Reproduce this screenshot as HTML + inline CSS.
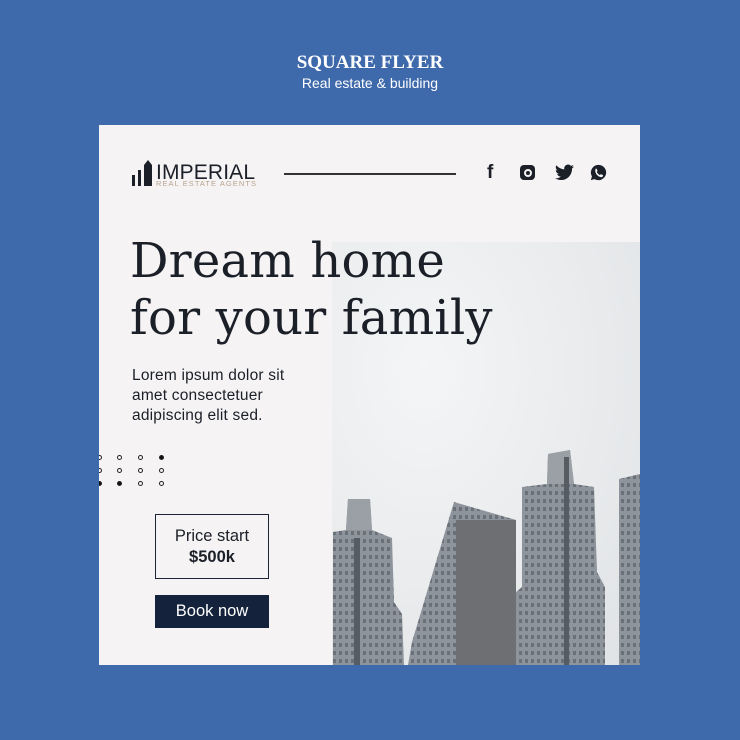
<!DOCTYPE html>
<html><head><style>
body{margin:0;width:740px;height:740px;background:#3e69ab;position:relative;overflow:hidden;font-family:"Liberation Sans",sans-serif}
.t1{position:absolute;top:52px;width:740px;text-align:center;color:#fff;font-family:"Liberation Serif",serif;font-weight:bold;font-size:19px}
.t2{position:absolute;top:75px;width:740px;text-align:center;color:#fff;font-size:14px}
.card{position:absolute;left:99px;top:125px;width:541px;height:540px;background:#f5f3f4;overflow:hidden}
.photo{position:absolute;left:233px;top:117px;width:308px;height:423px;background:radial-gradient(ellipse at 30% 30%,#f4f5f6 0%,#e8eaec 60%,#dfe2e5 100%)}
h1{position:absolute;left:31px;top:108px;margin:0;font-family:"DejaVu Serif","Liberation Serif",serif;font-weight:normal;font-size:48px;line-height:57px;color:#1b1f27;letter-spacing:0.2px;white-space:nowrap}
.p{position:absolute;left:33px;top:241px;font-size:15.5px;line-height:20px;color:#1b1f27;letter-spacing:0.2px}
.price{position:absolute;left:56px;top:389px;width:114px;height:65px;border:1.5px solid #1b2436;text-align:center;font-size:16.5px;line-height:21px;color:#1b1f27;box-sizing:border-box;padding-top:11px}
.book{position:absolute;left:56px;top:470px;width:114px;height:33px;background:#14233b;color:#fff;text-align:center;font-size:16.5px;line-height:33px}
.dot{position:absolute;width:5px;height:5px;border-radius:50%;border:1px solid #222;box-sizing:border-box}
.f{background:#111}
</style></head><body>
<div class="t1">SQUARE FLYER</div>
<div class="t2">Real estate &amp; building</div>
<div class="card">
 <div class="photo">
  <svg width="308" height="423" viewBox="0 0 308 423">
   <defs><pattern id="w" width="6" height="8" patternUnits="userSpaceOnUse"><rect width="6" height="8" fill="#8d949b"/><rect x="1" y="1" width="3" height="4" fill="#6a7178"/></pattern></defs>
   <g fill="url(#w)">
    <polygon points="1,423 1,290 14,288 16,257 38,257 40,288 60,296 62,360 70,372 72,423"/>
    <polygon points="76,423 80,400 122,260 184,278 184,423"/>
    <polygon points="184,423 184,350 190,345 190,245 215,242 216,212 238,208 242,242 262,245 265,330 273,345 273,423"/>
    <polygon points="287,423 287,237 308,232 308,423"/>
   </g>
   <g fill="#9aa0a6"><polygon points="16,257 38,257 40,288 14,288"/><polygon points="216,212 238,208 242,242 215,242"/></g>
   <g fill="#6d6f73">
    <rect x="22" y="296" width="6" height="127" fill="#555c63"/>
    <rect x="124" y="278" width="60" height="145"/>
    <rect x="232" y="215" width="5" height="208" fill="#555c63"/>
   </g>
  </svg>
 </div>
 <svg style="position:absolute;left:33px;top:34px" width="135" height="30">
  <rect x="0" y="16" width="3" height="11" fill="#1b1f27"/><rect x="6" y="11" width="3" height="16" fill="#1b1f27"/><polygon points="12,27 12,6 16,1 20,6 20,27" fill="#1b1f27"/>
  <text x="24" y="20" font-family="Liberation Sans" font-size="21" fill="#1b1f27" textLength="99">IMPERIAL</text>
  <text x="24" y="27" font-family="Liberation Sans" font-size="7.5" fill="#b7a48e" textLength="100">REAL ESTATE AGENTS</text>
 </svg>
 <div style="position:absolute;left:185px;top:48px;width:172px;height:1.5px;background:#333"></div>
 <div style="position:absolute;left:388px;top:37px;font-weight:bold;font-size:19px;color:#1b1f27">f</div>
 <div style="position:absolute;left:421px;top:40px;width:15px;height:15px;border-radius:4px;background:#1b1f27"><div style="position:absolute;left:3.5px;top:3.5px;width:8px;height:8px;border-radius:50%;border:2px solid #f5f3f4;box-sizing:border-box"></div></div>
 <svg style="position:absolute;left:456px;top:39px" width="19" height="17" viewBox="0 0 24 20"><path fill="#1b1f27" d="M24 2.4a10 10 0 0 1-2.8.8A5 5 0 0 0 23.3.4a10 10 0 0 1-3.1 1.2A4.9 4.9 0 0 0 11.8 6 14 14 0 0 1 1.7.9a4.9 4.9 0 0 0 1.5 6.6A4.9 4.9 0 0 1 1 6.9a4.9 4.9 0 0 0 3.9 4.8 5 5 0 0 1-2.2.1 4.9 4.9 0 0 0 4.6 3.4A9.9 9.9 0 0 1 0 17.3 14 14 0 0 0 7.5 19.5c9.1 0 14-7.5 14-14v-.6A10 10 0 0 0 24 2.4z"/></svg>
 <svg style="position:absolute;left:491px;top:39px" width="17" height="17" viewBox="0 0 20 20"><path fill="#1b1f27" d="M10 1a9 9 0 0 0-7.7 13.6L1 19l4.5-1.2A9 9 0 1 0 10 1z"/><path fill="#f5f3f4" d="M7 5.5c.5 0 .8.1 1 .6l.8 1.8c.1.3 0 .6-.2.8l-.6.7c.8 1.6 2 2.8 3.6 3.6l.7-.7c.2-.2.5-.3.8-.2l1.8.8c.4.2.5.5.5 1-.3 1-1.2 1.6-2.300 1.5-3.6-.5-6.4-3.3-6.9-6.9C6.1 6.8 6.3 5.8 7 5.5z"/></svg>
 <h1>Dream home<br>for your family</h1>
 <div class="p">Lorem ipsum dolor sit<br>amet consectetuer<br>adipiscing elit sed.</div>
 <div class="dot" style="left:-2px;top:330px"></div><div class="dot" style="left:18px;top:330px"></div><div class="dot" style="left:39px;top:330px"></div><div class="dot f" style="left:60px;top:330px"></div>
 <div class="dot" style="left:-2px;top:343px"></div><div class="dot" style="left:18px;top:343px"></div><div class="dot" style="left:39px;top:343px"></div><div class="dot" style="left:60px;top:343px"></div>
 <div class="dot f" style="left:-2px;top:356px"></div><div class="dot f" style="left:18px;top:356px"></div><div class="dot" style="left:39px;top:356px"></div><div class="dot" style="left:60px;top:356px"></div>
 <div class="price">Price start<br><b>$500k</b></div>
 <div class="book">Book now</div>
</div>
</body></html>
